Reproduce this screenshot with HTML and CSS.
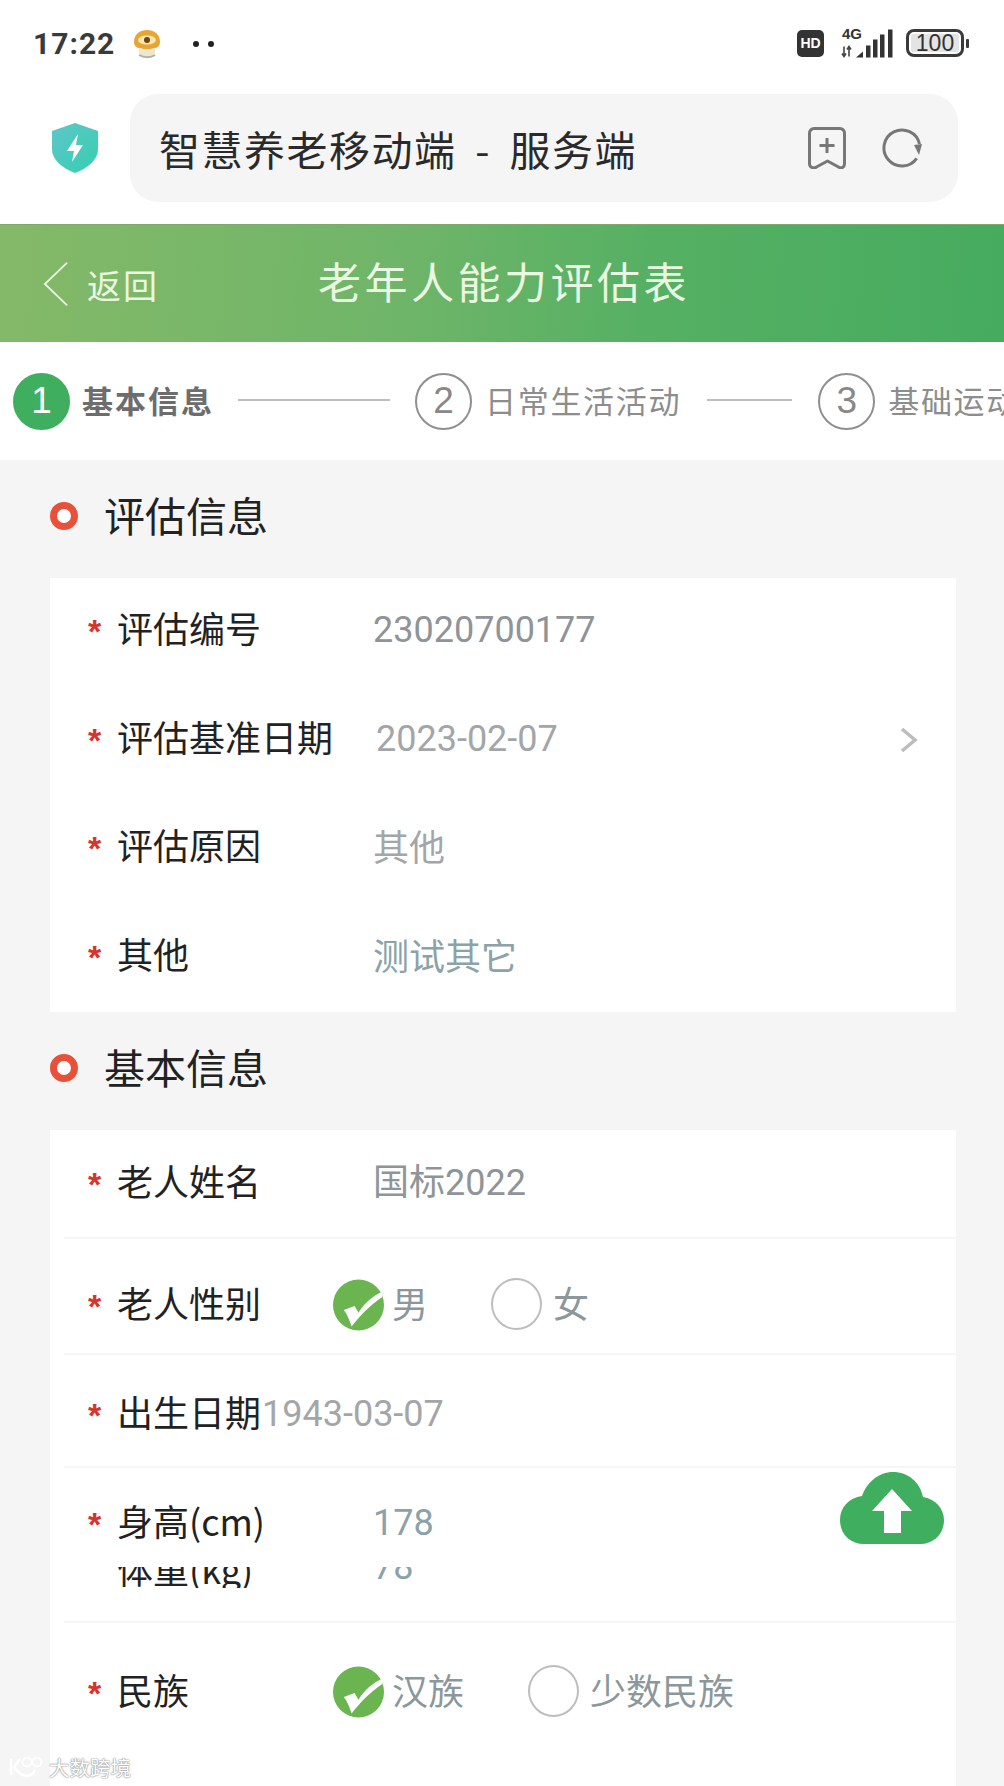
FILE: index.html
```html
<!DOCTYPE html>
<html lang="zh-CN">
<head>
<meta charset="utf-8">
<title>老年人能力评估表</title>
<link rel="stylesheet" href="styles.css">
</head>
<body>
<div class="phone">
  <div class="statusbar">
    <div class="status-left">
      <span class="time">17:22</span>
      <svg class="mushroom" viewBox="0 0 28 30"><path d="M6 20c-1 5 2 8 8 9 5 0 9-3 8-9z" fill="#efe6cf"/><path d="M1 13C1 5 7 1 14 1s13 4 13 12c0 5-4 7-13 7S1 18 1 13z" fill="#e9a532"/><ellipse cx="14" cy="11" rx="9" ry="4.500" fill="#f9e7ae"/><circle cx="14" cy="11" r="3" fill="#6e4313"/><path d="M6 26c5 3 12 3 16 0" fill="none" stroke="#a9b5a5" stroke-width="2"/></svg>
      <span class="dots"><i></i><i></i></span>
    </div>
    <div class="status-right">
      <span class="hd">HD</span>
      <div class="net">
        <span class="net-type">4G</span>
        <svg class="signal" viewBox="0 0 52 28"><path d="M3 27V17M1 24l2 3 2-3M8 17v10M6 20l2-3 2 3" fill="none" stroke="#444" stroke-width="1.600"/><path d="M15 28l7-6v6z" fill="#333"/><path d="M25 28V16h4.500v12zM32 28V10h4.500v18zM39 28V5h4.500v23zM47 28V0h4.500v28z" fill="#333"/></svg>
      </div>
      <div class="battery"><span class="battery-num">100</span></div>
      <span class="battery-nub"></span>
    </div>
  </div>

  <div class="browserbar">
    <svg class="shield" viewBox="0 0 46 50"><defs><linearGradient id="sg" x1="0" y1="0" x2="1" y2="1"><stop offset="0" stop-color="#5fc6c9"/><stop offset="1" stop-color="#34cfb0"/></linearGradient></defs><path d="M23 0l23 8v18c0 11-10 19-23 24C10 45 0 37 0 26V8z" fill="url(#sg)"/><path d="M26 11L15 28h7l-2 11 11-17h-7z" fill="#fff"/></svg>
    <div class="address">
      <span class="address-text">智慧养老移动端 - 服务端</span>
      <svg class="bookmark" viewBox="0 0 38 42"><path d="M6 1.500h26a4.500 4.500 0 0 1 4.500 4.500v31c0 3-3 5-6 3l-11-6-11 6c-3 2-7 0-7-3V6a4.500 4.500 0 0 1 4.500-4.500z" fill="none" stroke="#777" stroke-width="3" stroke-linejoin="round"/><path d="M19 11v15M11.500 18.500h15" stroke="#777" stroke-width="3" fill="none"/></svg>
      <svg class="refresh" viewBox="0 0 40 40"><path d="M34.700 30.300A18 18 0 1 1 37.500 16" fill="none" stroke="#777" stroke-width="3"/><path d="M32 17l8-1-3 11z" fill="#777"/></svg>
    </div>
  </div>

  <header class="navbar">
    <div class="back">
      <svg class="chevron-left" viewBox="0 0 28 48"><path d="M26 1L2 24l24 23" fill="none" stroke="#e8f5df" stroke-width="2"/></svg>
      <span class="back-text">返回</span>
    </div>
    <h1 class="nav-title">老年人能力评估表</h1>
    <span></span>
  </header>

  <nav class="steps">
    <span class="step-num active">1</span>
    <span class="step-label active">基本信息</span>
    <span class="step-line long"></span>
    <span class="step-num">2</span>
    <span class="step-label">日常生活活动</span>
    <span class="step-line short"></span>
    <span class="step-num">3</span>
    <span class="step-label">基础运动能力</span>
  </nav>

  <main class="content">
    <h2 class="section-title"><span class="ring"></span>评估信息</h2>
    <section class="card first">
      <div class="row"><span class="star">*</span><span class="label">评估编号</span><span class="value">23020700177</span></div>
      <div class="row"><span class="star">*</span><span class="label">评估基准日期</span><span class="value light shifted">2023-02-07</span><svg class="chevron-right" viewBox="0 0 18 26"><path d="M2 2l13 11L2 24" fill="none" stroke="#bdbdbd" stroke-width="3.500"/></svg></div>
      <div class="row"><span class="star">*</span><span class="label">评估原因</span><span class="value light cjk">其他</span></div>
      <div class="row"><span class="star">*</span><span class="label">其他</span><span class="value teal cjk">测试其它</span></div>
    </section>

    <h2 class="section-title"><span class="ring"></span>基本信息</h2>
    <section class="card second">
      <div class="row name-row ruled"><span class="star">*</span><span class="label">老人姓名</span><span class="value">国标2022</span></div>
      <div class="row radio-row ruled"><span class="star">*</span><span class="label short-col">老人性别</span>
        <span class="radio"><svg class="check" viewBox="0 0 52 52"><circle cx="26" cy="26" r="26" fill="#6ab54f"/><path d="M11 31l11-4 4 7c6-10 14-17 25-22l-1 6C38 26 28 36 19 48c-2-6-4-12-8-17z" fill="#fff"/></svg><span class="radio-text">男</span></span>
        <span class="radio gap-a"><span class="uncheck"></span><span class="radio-text">女</span></span>
      </div>
      <div class="row birth-row ruled"><span class="star">*</span><span class="label auto">出生日期</span><span class="value light">1943-03-07</span></div>
      <div class="row height-row"><span class="star">*</span><span class="label">身高(cm)</span><span class="value teal">178</span></div>
      <div class="row clipped ruled"><div class="clip-inner"><span class="label">体重(kg)</span><span class="value teal">78</span></div></div>
      <div class="row radio-row nation-row"><span class="star">*</span><span class="label short-col">民族</span>
        <span class="radio"><svg class="check" viewBox="0 0 52 52"><circle cx="26" cy="26" r="26" fill="#6ab54f"/><path d="M11 31l11-4 4 7c6-10 14-17 25-22l-1 6C38 26 28 36 19 48c-2-6-4-12-8-17z" fill="#fff"/></svg><span class="radio-text">汉族</span></span>
        <span class="radio gap-b"><span class="uncheck"></span><span class="radio-text">少数民族</span></span>
      </div>
    </section>
  </main>

  <svg class="cloud" viewBox="0 0 104 72"><path d="M24 72C10 72 0 62 0 48c0-13 9-22 22-24C27 10 39 0 53 0c15 0 27 10 30 25 12 2 21 11 21 23 0 14-10 24-24 24z" fill="#3fae5e"/><path d="M52 17l20 22H61v22H44V39H32z" fill="#fff"/></svg>

  <div class="watermark">
    <svg class="wm-logo" viewBox="0 0 36 24"><path d="M3 4v16M12 4L6 12c3 4 6 8 12 9 6 0 8-3 9-6" fill="none" stroke="#fff" stroke-width="2.500"/><circle cx="19" cy="7" r="4.500" fill="none" stroke="#fff" stroke-width="1.600"/><circle cx="29" cy="7" r="4.500" fill="none" stroke="#fff" stroke-width="1.600"/></svg>
    <span class="wm-text">大数跨境</span>
  </div>
</div>
</body>
</html>
```

FILE: styles.css
```css
* { box-sizing: border-box; }
html, body { margin: 0; padding: 0; background: #fff; }
.phone {
  position: relative;
  width: 1004px;
  height: 1786px;
  overflow: hidden;
  background: #f5f5f5;
  font-family: "Noto Sans CJK SC", "Noto Sans", sans-serif;
  color: #222;
}

/* status bar */
.statusbar {
  height: 94px;
  background: #fff;
  display: flex;
  align-items: flex-start;
  justify-content: space-between;
  padding: 29px 35px 0 33px;
}
.status-left { display: flex; align-items: center; height: 30px; }
.time {
  font-family: Roboto, sans-serif;
  font-weight: 700;
  font-size: 30px;
  line-height: 30px;
  letter-spacing: 1px;
  color: #3a3a3a;
}
.mushroom { width: 28px; height: 30px; margin-left: 18px; }
.dots { display: flex; gap: 9px; margin-left: 32px; }
.dots i { display: block; width: 6px; height: 6px; border-radius: 50%; background: #222; }
.status-right { display: flex; align-items: flex-start; }
.hd {
  width: 27px; height: 27px; margin-top: 1px;
  background: #333; border-radius: 5px;
  color: #fff;
  font-family: "Liberation Sans", sans-serif;
  font-weight: 700; font-size: 14px; line-height: 27px; text-align: center;
}
.net { position: relative; width: 52px; height: 29px; margin-left: 17px; }
.net-type {
  position: absolute; left: 1px; top: -3px;
  font-family: "Liberation Sans", sans-serif;
  font-weight: 700; font-size: 15px; line-height: 15px; color: #333;
}
.signal { display: block; width: 52px; height: 29px; }
.battery {
  width: 58px; height: 28px; margin-left: 13px;
  border: 3px solid #3a3a3a; border-radius: 8px;
  padding: 2px;
}
.battery-num {
  display: block; height: 18px; background: #e4e4e4; border-radius: 2px;
  font-family: "Liberation Sans", sans-serif;
  font-size: 23px; line-height: 18px; text-align: center; color: #333;
}
.battery-nub { width: 3px; height: 9px; background: #3a3a3a; margin: 10px 0 0 2px; border-radius: 1px; }

/* browser bar */
.browserbar {
  height: 130px;
  background: #fff;
  padding: 0 46px 22px 52px;
  display: flex;
  align-items: center;
}
.shield { width: 46px; height: 50px; flex: none; }
.address {
  flex: 1;
  height: 108px;
  margin-left: 32px;
  background: #f5f5f5;
  border-radius: 28px;
  display: flex;
  align-items: center;
  padding-left: 29px;
}
.address-text { font-size: 41px; line-height: 50px; color: #2a2a2a; white-space: pre; flex: 1; letter-spacing: 1.500px; word-spacing: 8px; }
.bookmark { width: 38px; height: 42px; flex: none; margin-right: 36px; }
.refresh { width: 40px; height: 40px; flex: none; margin-right: 36px; }

/* nav */
.navbar {
  height: 118px;
  background: linear-gradient(94deg, #84b968 0%, #6fb569 40%, #55b063 65%, #46ab5f 100%);
  display: grid;
  grid-template-columns: 1fr auto 1fr;
  align-items: center;
  color: #eaf7e2;
  border-top: 1px solid #7ea86c;
}
.back { display: flex; align-items: center; padding-left: 43px; }
.chevron-left { width: 26px; height: 46px; }
.back-text { font-size: 34px; line-height: 40px; margin-left: 18px; letter-spacing: 2px; margin-top: 2px; }
.nav-title { margin: -8px 0 0 4px; font-size: 43px; font-weight: 400; line-height: 56px; letter-spacing: 3.500px; }

/* steps */
.steps {
  height: 118px;
  background: #fff;
  display: flex;
  align-items: center;
  padding-left: 13px;
  white-space: nowrap;
  color: #8d8d8d;
}
.step-num {
  flex: none;
  width: 57px; height: 57px;
  border: 2px solid #8f8f8f;
  border-radius: 50%;
  display: flex; align-items: center; justify-content: center;
  font-family: "Liberation Sans", sans-serif;
  font-size: 37px;
  color: #888;
}
.step-num.active { background: #3fae5e; border-color: #3fae5e; color: #fff; }
.step-label { flex: none; margin-left: 13px; margin-top: -2px; font-size: 31px; line-height: 40px; letter-spacing: 1.700px; color: #8d8d8d; }
.step-label.active { font-weight: 700; color: #6d6d6d; margin-left: 12px; letter-spacing: 2px; }
.step-line { flex: none; height: 2px; background: #bdbdbd; margin-top: -3px; }
.step-line.long { width: 152px; margin-left: 24px; margin-right: 25px; }
.step-line.short { width: 85px; margin-left: 26px; margin-right: 26px; }

/* content */
.content { padding: 0 48px 0 50px; }
.section-title {
  margin: 0;
  height: 118px;
  padding-bottom: 10px;
  display: flex;
  align-items: center;
  font-size: 41px;
  font-weight: 400;
  color: #222;
}
.ring {
  width: 28px; height: 28px;
  border: 7px solid #e8503a;
  border-radius: 50%;
  background: #fff;
  margin-top: 4px;
  margin-right: 26px;
}
.card { background: #fff; }
.card.second { height: 700px; }
.row {
  position: relative;
  height: 108.500px;
  display: flex;
  align-items: center;
  padding-left: 38px;
  padding-bottom: 4px;
}
.row.name-row { height: 109px; }
.row.radio-row { height: 116px; padding: 16px 0 0 38px; }
.row.birth-row { height: 113px; padding: 8px 0 4px 38px; }
.row.height-row { height: 99px; padding: 32px 0 0 38px; align-items: flex-start; }
.row.nation-row { height: 120px; padding-top: 18px; }
.row.ruled::after {
  content: "";
  position: absolute;
  left: 14px; right: 0; bottom: 0;
  height: 2px;
  background: #f6f6f6;
}
.star {
  width: 30px;
  flex: none;
  font-family: "Liberation Sans", sans-serif;
  font-weight: 700;
  font-size: 34px;
  line-height: 32px;
  color: #d9342b;
  margin-top: 2px;
}
.height-row .star { margin-top: 8px; }
.label { flex: none; width: 255px; margin-top: -6px; margin-left: -1px; font-size: 36px; line-height: 46px; color: #222; }
.height-row .label { margin-top: -3px; }
.label.auto { width: auto; }
.label.short-col { width: 216px; }
.value { font-family: Roboto, "Noto Sans CJK SC", sans-serif; font-size: 36px; line-height: 46px; color: #8f9498; margin-left: 1px; }
.value.light { color: #a3a6a8; }
.value.teal { color: #8aa2a8; }
.value.cjk { margin-top: 4px; }
.value.shifted { margin-left: 4px; }
.chevron-right { position: absolute; right: 38px; top: 40px; width: 18px; height: 26px; }
.radio { display: flex; align-items: center; flex: none; }
.check { width: 51px; height: 52px; flex: none; }
.uncheck { width: 51px; height: 52px; border: 2px solid #bdbdbd; border-radius: 50%; background: #fff; margin-top: -3px; }
.radio-text { margin-left: 8px; font-size: 36px; line-height: 46px; color: #8b979a; margin-top: -6px; }
.uncheck + .radio-text { margin-left: 11px; }
.gap-a { margin-left: 63px; }
.gap-b { margin-left: 64px; }

/* 被上一行压住的行 */
.row.clipped { height: 56px; padding: 0; display: block; }
.clip-inner {
  height: 21px;
  overflow: hidden;
  display: flex;
  align-items: flex-end;
  padding-left: 68px;
}
.clip-inner .label { line-height: 40px; margin-top: 0; }
.clip-inner .value { line-height: 42px; }

/* floating */
.cloud { position: absolute; left: 840px; top: 1472px; width: 104px; height: 72px; }
.watermark { position: absolute; left: 8px; top: 1755px; display: flex; align-items: center; }
.wm-logo { width: 36px; height: 24px; }
.wm-text { margin-left: 5px; font-size: 20.500px; line-height: 24px; color: #fff; text-shadow: 0 0 2px #888, 0 0 1px #777; }
```
